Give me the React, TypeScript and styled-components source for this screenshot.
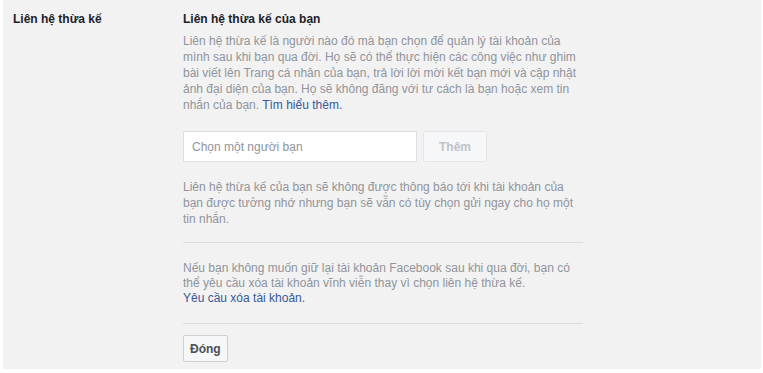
import React from "react";
import styled, { createGlobalStyle } from "styled-components";

const Global = createGlobalStyle`
  html, body { margin: 0; padding: 0; background: #ffffff; }
  body { font-family: "Liberation Sans", Arial, Helvetica, sans-serif; font-size: 12px; color: #1d2129; }
`;

const Panel = styled.div`
  margin: 0 2px 0 3px;
  background: #f2f2f2;
  display: grid;
  grid-template-columns: 170px 400px;
  align-items: start;
  padding: 11px 0 0 10px;
  height: 369px;
  box-sizing: border-box;
`;

const Label = styled.div`
  font-weight: bold;
  color: #1d2129;
  font-size: 12px;
  line-height: 16px;
`;

const Content = styled.div`
  display: flex;
  flex-direction: column;
`;

const Title = styled.div`
  font-weight: bold;
  font-size: 12px;
  line-height: 16px;
  color: #1d2129;
  margin-bottom: 6px;
`;

const Text = styled.p<{ $lh?: number }>`
  margin: 0;
  color: #90949c;
  font-size: 12px;
  line-height: ${(p) => p.$lh ?? 16}px;
`;

const Link = styled.a`
  color: #365899;
  text-decoration: none;
  cursor: pointer;
`;

const PickerRow = styled.div`
  display: flex;
  gap: 6px;
  margin: 18px 0 17px;
`;

const Input = styled.input`
  width: 234px;
  height: 31px;
  box-sizing: border-box;
  border: 1px solid #dddfe2;
  background: #fff;
  padding: 0 8px;
  font-family: inherit;
  font-size: 12px;
  color: #1d2129;
  &::placeholder { color: #90949c; }
`;

const Button = styled.button<{ $disabled?: boolean }>`
  height: ${(p) => (p.$disabled ? 31 : 27)}px;
  box-sizing: border-box;
  padding: 0 ${(p) => (p.$disabled ? 15 : 6)}px;
  border: 1px solid ${(p) => (p.$disabled ? "#e4e6ea" : "#ced0d4")};
  border-radius: 2px;
  background: #f6f7f9;
  color: ${(p) => (p.$disabled ? "#bec3c9" : "#4b4f56")};
  font-family: inherit;
  font-weight: bold;
  font-size: 12px;
  align-self: flex-start;
`;

const Divider = styled.hr<{ $m?: string }>`
  border: 0;
  border-top: 1px solid #dadde1;
  margin: ${(p) => p.$m ?? "0"};
  width: 400px;
`;

export default function App() {
  return (
    <>
      <Global />
      <Panel>
        <Label>Liên hệ thừa kế</Label>
        <Content>
          <Title>Liên hệ thừa kế của bạn</Title>
          <Text>
            Liên hệ thừa kế là người nào đó mà bạn chọn để quản lý tài khoản của
            mình sau khi bạn qua đời. Họ sẽ có thể thực hiện các công việc như ghim
            bài viết lên Trang cá nhân của bạn, trả lời lời mời kết bạn mới và cập nhật
            ảnh đại diện của bạn. Họ sẽ không đăng với tư cách là bạn hoặc xem tin
            nhắn của bạn. <Link>Tìm hiểu thêm.</Link>
          </Text>
          <PickerRow>
            <Input placeholder="Chọn một người bạn" />
            <Button $disabled>Thêm</Button>
          </PickerRow>
          <Text>
            Liên hệ thừa kế của bạn sẽ không được thông báo tới khi tài khoản của
            bạn được tưởng nhớ nhưng bạn sẽ vẫn có tùy chọn gửi ngay cho họ một
            tin nhắn.
          </Text>
          <Divider $m="15px 0 18px" />
          <Text $lh={15}>
            Nếu bạn không muốn giữ lại tài khoản Facebook sau khi qua đời, bạn có
            thể yêu cầu xóa tài khoản vĩnh viễn thay vì chọn liên hệ thừa kế.
            <br />
            <Link>Yêu cầu xóa tài khoản.</Link>
          </Text>
          <Divider $m="17px 0 11px" />
          <Button>Đóng</Button>
        </Content>
      </Panel>
    </>
  );
}
